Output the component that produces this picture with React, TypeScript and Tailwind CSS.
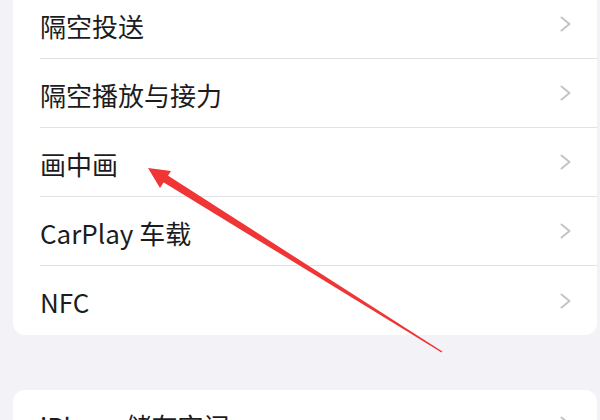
import { ReactNode } from 'react';

const items = ['隔空投送', '隔空播放与接力', '画中画', 'CarPlay 车载', 'NFC'];

function Chevron() {
    return (
        <svg width="12" height="16" viewBox="0 0 12 16" className="shrink-0">
            <polyline points="1.5,1.5 9.5,8 1.5,14.5" fill="none" stroke="#c4c4c7" strokeWidth="2" strokeLinecap="round" strokeLinejoin="round" />
        </svg>
    );
}

function Row({ children, last }: { children: ReactNode; last?: boolean }) {
    return (
        <div className="pl-[27px]">
            <div className={`flex h-[69px] items-center justify-between pr-[25px] ${last ? '' : 'border-b border-[#e2e2e5]'}`}>
                <span className="pt-[3px] text-[26px] leading-none text-[#1c1c1e]">{children}</span>
                <Chevron />
            </div>
        </div>
    );
}

function Arrow() {
    // 红色标注箭头，盖在列表上
    return (
        <svg className="pointer-events-none absolute left-0 top-0" width="600" height="420" viewBox="0 0 600 420">
            <polygon points="167,175 163,182 441.6,352.4 442.4,351.6" fill="#ef3535" />
            <polygon points="148,168 171,171 160,188" fill="#ef3535" />
        </svg>
    );
}

export default function App() {
    return (
        <div
            className="relative h-[420px] w-[600px] overflow-hidden bg-[#f2f2f7]"
            style={{ fontFamily: '"Noto Sans CJK SC", "Noto Sans", sans-serif' }}
        >
            <div className="-mt-[10px] ml-[13px] mr-[3px] rounded-[12px] bg-white">
                {items.map((label, i) => (
                    <Row key={label} last={i === items.length - 1}>
                        {label}
                    </Row>
                ))}
            </div>

            <div className="ml-[13px] mr-[3px] mt-[55px] rounded-[12px] bg-white">
                <Row>iPhone储存空间</Row>
            </div>

            <Arrow />
        </div>
    );
}
